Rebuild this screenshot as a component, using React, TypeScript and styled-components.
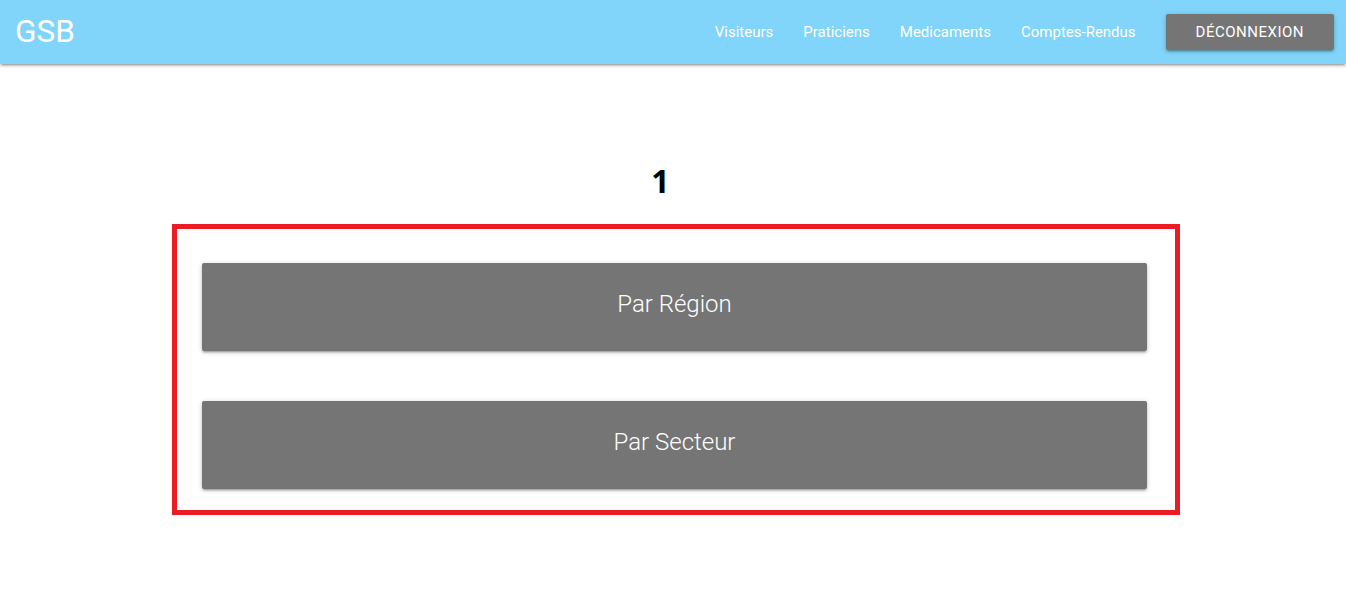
import React from "react";
import styled, { createGlobalStyle } from "styled-components";

const GlobalStyle = createGlobalStyle`
  html, body {
    margin: 0;
    padding: 0;
    background: #ffffff;
    font-family: Roboto, "Liberation Sans", sans-serif;
  }
  * { box-sizing: border-box; }
`;

const shadow1 =
  "0 2px 2px 0 rgba(0,0,0,0.14), 0 3px 1px -2px rgba(0,0,0,0.12), 0 1px 5px 0 rgba(0,0,0,0.2)";

const NavBar = styled.nav`
  height: 64px;
  background: #81d4fa;
  box-shadow: ${shadow1};
  display: flex;
  align-items: center;
  justify-content: space-between;
  padding: 0 12px 0 15px;
  color: #ffffff;
`;

const Brand = styled.a`
  font-family: Roboto, "Liberation Sans", sans-serif;
  font-size: 31.5px;
  line-height: 64px;
  color: #ffffff;
  text-decoration: none;
`;

const NavList = styled.ul`
  display: flex;
  align-items: center;
  list-style: none;
  margin: 0;
  padding: 0;
  height: 64px;
`;

const NavLink = styled.a`
  display: block;
  padding: 0 15px;
  font-size: 15px;
  line-height: 64px;
  color: #ffffff;
  text-decoration: none;
`;

const LogoutButton = styled.button`
  margin-left: 15px;
  height: 36px;
  padding: 0 30px;
  border: none;
  border-radius: 2px;
  background: #757575;
  color: #ffffff;
  font-family: Roboto, "Liberation Sans", sans-serif;
  font-size: 15px;
  letter-spacing: 0.5px;
  line-height: 36px;
  text-transform: uppercase;
  box-shadow: ${shadow1};
  cursor: pointer;
`;

const Main = styled.main`
  padding-top: 101px;
`;

const Title = styled.h1`
  margin: 0 0 27px 0;
  padding-right: 25px;
  text-align: center;
  font-family: "Open Sans", "Liberation Sans", sans-serif;
  font-weight: 700;
  font-size: 32px;
  line-height: 32px;
  color: #000000;
`;

const Frame = styled.section`
  margin-left: 172px;
  width: 1008px;
  border: 5px solid #ed1c24;
  padding: 34px 0 21px 25px;
  display: flex;
  flex-direction: column;
  gap: 50px;
`;

const ChoiceButton = styled.button`
  width: 945px;
  height: 88px;
  border: none;
  border-radius: 2px;
  background: #757575;
  color: #ffffff;
  font-family: Roboto, "Liberation Sans", sans-serif;
  font-weight: 300;
  font-size: 24px;
  line-height: 82px;
  text-align: center;
  box-shadow: ${shadow1};
  cursor: pointer;
  padding: 0 0 6px 0;
`;

const links = ["Visiteurs", "Praticiens", "Medicaments", "Comptes-Rendus"];

export default function App() {
  return (
    <>
      <GlobalStyle />
      <NavBar>
        <Brand href="#">GSB</Brand>
        <NavList>
          {links.map((l) => (
            <li key={l}>
              <NavLink href="#">{l}</NavLink>
            </li>
          ))}
          <li>
            <LogoutButton>Déconnexion</LogoutButton>
          </li>
        </NavList>
      </NavBar>
      <Main>
        <Title>1</Title>
        <Frame>
          <ChoiceButton>Par Région</ChoiceButton>
          <ChoiceButton>Par Secteur</ChoiceButton>
        </Frame>
      </Main>
    </>
  );
}
